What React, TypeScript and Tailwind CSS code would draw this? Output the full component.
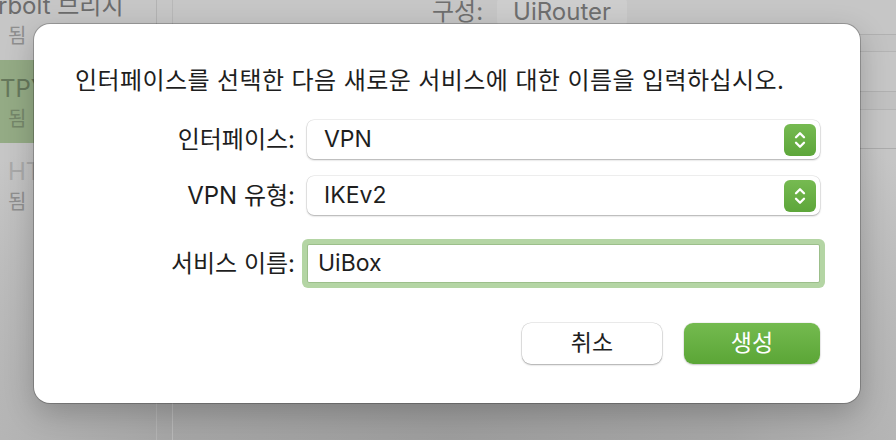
const font = "font-['Inter','Noto_Sans_CJK_KR',sans-serif]";

type SidebarItemProps = {
  title: string;
  sub: string;
  active?: boolean;
  dim?: boolean;
  className?: string;
};

const SidebarItem = ({ title, sub, active, dim, className }: SidebarItemProps) => {
  return (
    <div
      className={`h-[83px] pt-[14px] pl-[8px] whitespace-nowrap ${
        active ? "bg-[#94ab85]" : ""
      } ${className ?? ""}`}
    >
      <div
        className={`text-[24px] leading-[30px] ${
          active ? "text-[#66785c]" : dim ? "text-[#a9a9a9]" : "text-[#6c6c6c]"
        }`}
      >
        {title}
      </div>
      <div
        className={`text-[20px] leading-[30px] ${
          active ? "text-[#75876a]" : "text-[#8f8f8f]"
        }`}
      >
        {sub}
      </div>
    </div>
  );
};

const Stepper = () => {
  return (
    <div className="w-[32px] h-[32px] rounded-[6px] bg-gradient-to-b from-[#76ba51] to-[#5da63a] shrink-0">
      <svg width="32" height="32" viewBox="0 0 32 32" fill="none">
        <path
          d="M12 13.3 L16 9.3 L20 13.3"
          stroke="white"
          strokeWidth="2.3"
          strokeLinecap="round"
          strokeLinejoin="round"
        />
        <path
          d="M12 18.7 L16 22.7 L20 18.7"
          stroke="white"
          strokeWidth="2.3"
          strokeLinecap="round"
          strokeLinejoin="round"
        />
      </svg>
    </div>
  );
};

const SelectBox = ({ value }: { value: string }) => {
  return (
    <div className="flex-1 h-[39px] flex items-center justify-between pl-[17px] pr-[4px] bg-white rounded-[7px] shadow-[0_0_0_0.5px_rgba(0,0,0,0.12),0_1px_2px_rgba(0,0,0,0.28)]">
      <span className="text-[23px] text-[#1e1e1e]">{value}</span>
      <Stepper />
    </div>
  );
};

const FormRow = ({ label, children, className }: { label: string; children: React.ReactNode; className?: string }) => {
  return (
    <div className={`flex items-center gap-[12px] ${className ?? ""}`}>
      <div className="w-[220px] text-right text-[24px] text-[#1e1e1e] whitespace-nowrap">{label}</div>
      {children}
    </div>
  );
};

const App = () => {
  return (
    <div
      className={`relative w-[896px] h-[440px] overflow-hidden ${font} bg-[radial-gradient(ellipse_70%_90%_at_50%_100%,#9d9d9d_0%,#a6a6a6_45%,#c6c6c6_100%)]`}
    >
      {/* window behind the sheet */}
      <div className="flex h-full">
        <div className="w-[157px] shrink-0 border-r border-[#b3b3b3] overflow-hidden">
          <SidebarItem title="rbolt 브리지" sub="됨" className="mt-[-23px] [&>div:first-child]:ml-[-10px]" />
          <SidebarItem title="TPY" sub="됨" active className="[&>div:first-child]:ml-[-8px]" />
          <SidebarItem title="HTTP" sub="됨" dim />
        </div>
        <div className="w-[16px] shrink-0 border-r border-[#b8b8b8]" />
        <div className="flex-1 flex flex-col">
          <div className="h-[38px] flex items-start gap-[14px] pl-[259px] mt-[-4px]">
            <span className="text-[24px] leading-[32px] text-[#6f6f6f]">구성:</span>
            <div className="h-[32px] px-[16px] rounded-[7px] bg-[#cdcdcd] text-[24px] leading-[32px] text-[#6f6f6f]">
              UiRouter
            </div>
          </div>
          <div className="h-[17px] border-t border-[#b1b1b1] bg-[#bdbdbd]/40" />
          <div className="h-[40px] border-t border-[#b4b4b4]" />
          <div className="h-[18px] border-t border-[#b1b1b1] bg-[#b9b9b9]/40" />
          <div className="h-[39px] border-t border-[#b4b4b4]" />
          <div className="border-t border-[#acacac]" />
        </div>
      </div>

      {/* sheet */}
      <div className="absolute left-[34px] top-[24px] w-[826px] h-[379px] bg-white rounded-[16px] shadow-[0_0_0_1px_rgba(0,0,0,0.22),0_10px_30px_rgba(0,0,0,0.22)] pl-[41px] pr-[40px] pt-[42px]">
        <p className="text-[24px] leading-[30px] tracking-[0.4px] text-[#1e1e1e] whitespace-nowrap">
          인터페이스를 선택한 다음 새로운 서비스에 대한 이름을 입력하십시오.
        </p>
        <FormRow label="인터페이스:" className="mt-[24px]">
          <SelectBox value="VPN" />
        </FormRow>
        <FormRow label="VPN 유형:" className="mt-[17px]">
          <SelectBox value="IKEv2" />
        </FormRow>
        <FormRow label="서비스 이름:" className="mt-[29px]">
          <div className="flex-1 h-[39px] flex items-center pl-[10px] bg-white rounded-[2px] border border-[#9cbf8b] shadow-[0_0_0_5px_#b4d5a4]">
            <span className="text-[23px] text-[#1e1e1e]">UiBox</span>
          </div>
        </FormRow>
        <div className="flex justify-end gap-[22px] mt-[40px]">
          <button className="w-[140px] h-[41px] rounded-[9px] bg-white text-[23px] text-[#1e1e1e] shadow-[0_0_0_0.5px_rgba(0,0,0,0.15),0_1px_2px_rgba(0,0,0,0.28)]">
            취소
          </button>
          <button className="w-[136px] h-[41px] rounded-[9px] bg-gradient-to-b from-[#74ba4f] to-[#5ba636] text-[23px] text-white shadow-[0_0_0_0.5px_rgba(0,0,0,0.08),0_1px_2px_rgba(0,0,0,0.2)]">
            생성
          </button>
        </div>
      </div>
    </div>
  );
};

export default App;
